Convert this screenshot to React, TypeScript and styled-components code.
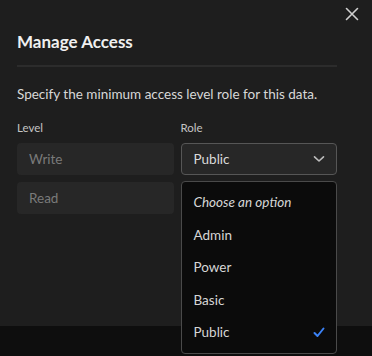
import styled, { createGlobalStyle } from "styled-components";

const GlobalStyle = createGlobalStyle`
    html, body {
        margin: 0;
        padding: 0;
        background: #0e0e0e;
        font-family: Lato, "Noto Sans", sans-serif;
    }
`;

const Page = styled.div`
    width: 372px;
    height: 356px;
    overflow: hidden;
    background: #0e0e0e;
`;

const Modal = styled.div`
    position: relative;
    height: 326px;
    background: #1e1e1e;
    padding: 26px 35px 0 17px;
    box-sizing: border-box;
    color: #dcdcdc;
`;

const Close = styled.button`
    position: absolute;
    top: 6px;
    right: 12px;
    background: none;
    border: none;
    padding: 0;
    width: 16px;
    height: 16px;
    color: #cfcfcf;
    cursor: pointer;
`;

const Title = styled.h2`
    margin: 0;
    font-size: 17px;
    font-weight: 700;
    color: #f0f0f0;
    line-height: 32px;
    padding-bottom: 7px;
    border-bottom: 2px solid #2c2c2c;
`;

const Description = styled.p`
    margin: 14px 0 0;
    font-size: 13.5px;
    line-height: 26px;
    color: #d8d8d8;
    white-space: nowrap;
`;

const Grid = styled.div`
    display: grid;
    grid-template-columns: 1fr 1fr;
    column-gap: 7px;
    margin-top: 12px;
`;

const Column = styled.div`
    display: flex;
    flex-direction: column;
    gap: 7px;
`;

const Label = styled.div`
    font-size: 11.5px;
    color: #c4c4c4;
    line-height: 18px;
    margin-bottom: -1px;
`;

const Field = styled.div`
    height: 32px;
    border-radius: 4px;
    background: #272727;
    display: flex;
    align-items: center;
    padding: 0 12px;
    font-size: 13.5px;
    color: #7a7a7a;
`;

const SelectWrap = styled.div`
    position: relative;
`;

const Select = styled.div`
    height: 32px;
    box-sizing: border-box;
    border-radius: 4px;
    background: #272727;
    border: 1px solid #565656;
    display: flex;
    align-items: center;
    justify-content: space-between;
    padding: 0 11px 0 12px;
    font-size: 13.5px;
    color: #dadada;
`;

const Menu = styled.ul`
    position: absolute;
    top: 38px;
    left: 0;
    right: 0;
    margin: 0;
    padding: 4px 0 4px;
    list-style: none;
    background: #0b0b0b;
    border: 1px solid #4a4a4a;
    border-radius: 4px;
`;

const Option = styled.li<{ $placeholder?: boolean }>`
    height: 32.5px;
    display: flex;
    align-items: center;
    justify-content: space-between;
    padding: 0 11px 0 12px;
    font-size: 13.5px;
    color: #d6d6d6;
    font-style: ${({ $placeholder }) => ($placeholder ? "italic" : "normal")};
`;

const options = ["Admin", "Power", "Basic", "Public"];

const App = () => {
    return (
        <Page>
            <GlobalStyle />
            <Modal>
                <Close aria-label="Close">
                    <svg width="16" height="16" viewBox="0 0 16 16" fill="none" stroke="currentColor" strokeWidth="1.6" strokeLinecap="round">
                        <path d="M2.5 2.5l11 11M13.5 2.5l-11 11" />
                    </svg>
                </Close>
                <Title>Manage Access</Title>
                <Description>Specify the minimum access level role for this data.</Description>

                <Grid>
                    <Column>
                        <Label>Level</Label>
                        <Field>Write</Field>
                        <Field>Read</Field>
                    </Column>
                    <Column>
                        <Label>Role</Label>
                        <SelectWrap>
                            <Select>
                                Public
                                <svg width="12" height="8" viewBox="0 0 12 8" fill="none" stroke="#bdbdbd" strokeWidth="1.6" strokeLinecap="round" strokeLinejoin="round">
                                    <path d="M1.5 1.8L6 6l4.5-4.2" />
                                </svg>
                            </Select>
                            <Menu>
                                <Option $placeholder>Choose an option</Option>
                                {options.map((o) => (
                                    <Option key={o}>
                                        {o}
                                        {o === "Public" && (
                                            <svg width="12" height="11" viewBox="0 0 12 11" fill="none" stroke="#3b82f6" strokeWidth="2" strokeLinecap="round" strokeLinejoin="round">
                                                <path d="M1.5 6L4.5 9 10.5 1.5" />
                                            </svg>
                                        )}
                                    </Option>
                                ))}
                            </Menu>
                        </SelectWrap>
                    </Column>
                </Grid>
            </Modal>
        </Page>
    );
};

export default App;
